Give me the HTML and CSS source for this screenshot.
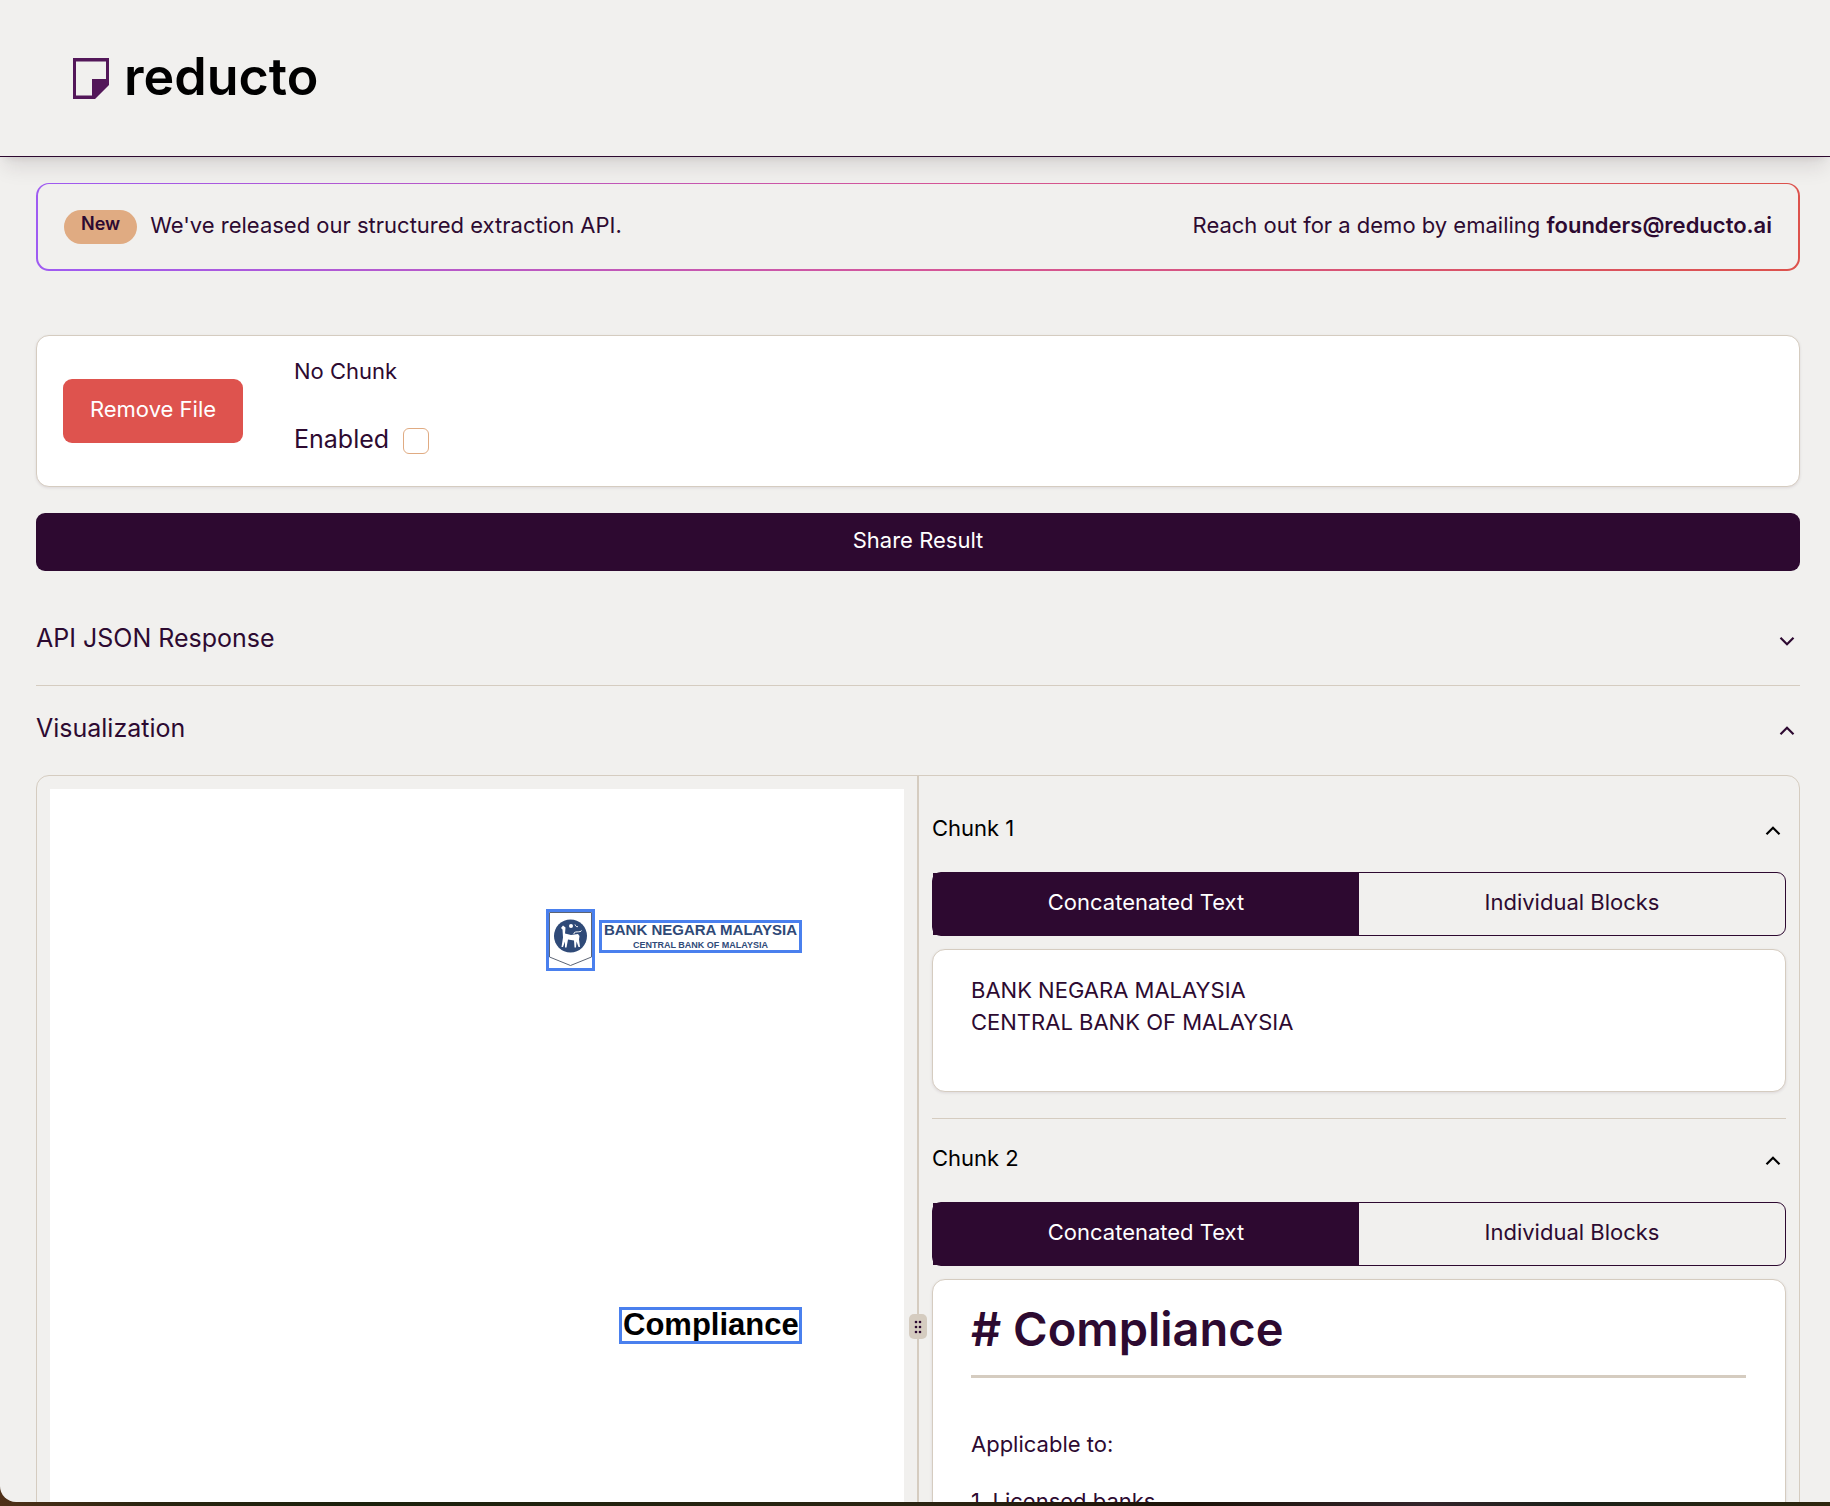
FILE: index.html
```
<!DOCTYPE html>
<html lang="en">
<head>
  <meta charset="utf-8">
  <meta name="viewport" content="width=device-width, initial-scale=1">
  <title>Reducto</title>
  <link rel="stylesheet" href="styles.css">
</head>
<body>
  <div class="window">
    <header class="site-header">
      <a class="brand" href="#">
        <svg class="brand-mark" viewBox="0 0 36 41" aria-hidden="true"><path fill-rule="evenodd" d="M0 0H36V27L22 41H0ZM3 3.5V37.5H19V21H33V3.5Z"/></svg>
        <span>reducto</span>
      </a>
    </header>

    <main class="content">
      <section class="banner">
        <span class="pill">New</span>
        <p class="banner-text">We've released our structured extraction API.</p>
        <p class="banner-text banner-contact">Reach out for a demo by emailing <a href="mailto:founders@reducto.ai">founders@reducto.ai</a></p>
      </section>

      <section class="card settings">
        <button class="button button-danger" type="button">Remove File</button>
        <div class="option">
          <p>No Chunk</p>
          <label class="toggle">Enabled <input type="checkbox"></label>
        </div>
      </section>

      <button class="button button-primary" type="button">Share Result</button>

      <div class="accordion">
        <h2 class="accordion-item">
          <button class="trigger" type="button" aria-expanded="false">
            <span>API JSON Response</span>
            <svg class="chevron" viewBox="0 0 24 24" aria-hidden="true"><path d="M6 9l6 6 6-6"/></svg>
          </button>
        </h2>
        <h2>
          <button class="trigger" type="button" aria-expanded="true">
            <span>Visualization</span>
            <svg class="chevron" viewBox="0 0 24 24" aria-hidden="true"><path d="M6 15l6-6 6 6"/></svg>
          </button>
        </h2>
      </div>

      <div class="split">
        <div class="pane">
          <div class="page">
            <div class="region region-emblem">
              <svg viewBox="0 0 43 56" aria-hidden="true">
                <path class="shield" d="M.5 .5H42.5V45L21.5 53.5L.5 45Z"/>
                <circle class="disc" cx="21.5" cy="24" r="16.5"/>
                <g class="deer">
                  <path d="M12 16L14 13.500L16.500 15.500L16 21.500L22 23L29 22L30.500 24L30 27.500L31 35H29.500L27.500 29.500L27 35.500H25.500L25 28.500L19 27.500L17.500 35.500H16L16 29.500L14 35H12.500L14 25.500L13.500 17.500Z"/>
                  <path class="tail" d="M25 22C24 18.500 32 21 32.500 18.500"/>
                  <circle cx="22" cy="14" r="2"/>
                  <path class="tail" d="M26 12.500C26.500 14.500 28 15 29 14.500"/>
                </g>
              </svg>
            </div>
            <div class="region region-name">
              <span class="scan-name">BANK NEGARA MALAYSIA</span>
              <span class="scan-sub">CENTRAL BANK OF MALAYSIA</span>
            </div>
            <div class="region region-title">Compliance</div>
          </div>
        </div>

        <div class="divider">
          <span class="grip">
            <svg viewBox="0 0 10 14" aria-hidden="true"><circle cx="3" cy="2" r="1.300"/><circle cx="7" cy="2" r="1.300"/><circle cx="3" cy="7" r="1.300"/><circle cx="7" cy="7" r="1.300"/><circle cx="3" cy="12" r="1.300"/><circle cx="7" cy="12" r="1.300"/></svg>
          </span>
        </div>

        <div class="pane">
          <section class="chunk">
            <h3>
              <button class="trigger trigger-chunk" type="button" aria-expanded="true">
                <span>Chunk 1</span>
                <svg class="chevron" viewBox="0 0 24 24" aria-hidden="true"><path d="M6 15l6-6 6 6"/></svg>
              </button>
            </h3>
            <div class="tabs">
              <button class="tab tab-active" type="button">Concatenated Text</button>
              <button class="tab" type="button">Individual Blocks</button>
            </div>
            <div class="card chunk-body">
              <p>BANK NEGARA MALAYSIA<br>CENTRAL BANK OF MALAYSIA</p>
            </div>
          </section>

          <section class="chunk">
            <h3>
              <button class="trigger trigger-chunk" type="button" aria-expanded="true">
                <span>Chunk 2</span>
                <svg class="chevron" viewBox="0 0 24 24" aria-hidden="true"><path d="M6 15l6-6 6 6"/></svg>
              </button>
            </h3>
            <div class="tabs">
              <button class="tab tab-active" type="button">Concatenated Text</button>
              <button class="tab" type="button">Individual Blocks</button>
            </div>
            <div class="card chunk-body">
              <h1 class="doc-title"># Compliance</h1>
              <p>Applicable to:</p>
              <p>1. Licensed banks</p>
            </div>
          </section>
        </div>
      </div>
    </main>
  </div>
</body>
</html>
```
FILE: styles.css
```
:root {
  --ink: #2d0a31;
  --plum: #2d0930;
  --paper: #f1f0ee;
  --line: #d5ccc0;
  --tan: #e0ab82;
  --red: #de534e;
  --blue: #4a80ee;
  --navy: #2f4a78;
}

* {
  box-sizing: border-box;
}

h1, h2, h3, p {
  margin: 0;
  font: inherit;
}

button {
  font: inherit;
  color: inherit;
  border: 0;
  background: none;
  cursor: pointer;
}

body {
  margin: 0;
  height: 100vh;
  padding-bottom: 4px;
  overflow: hidden;
  background: linear-gradient(to right, #4f3018, #2a2410 8%, #1b200c 20%, #2b2412 50%, #1c1208 65%, #33242a 78%, #1b2018 86%, #2e260e);
  font-family: Inter, "Liberation Sans", sans-serif;
  font-size: 22px;
  line-height: 32px;
  color: var(--ink);
}

.window {
  height: 100%;
  overflow: hidden;
  background: var(--paper);
  border-bottom-left-radius: 16px;
}

/* Header */

.site-header {
  position: relative;
  display: flex;
  padding: 46px 73px;
  border-bottom: 1px solid var(--plum);
  box-shadow: 0 13px 20px -4px rgba(40, 25, 30, .12), 0 5px 8px -5px rgba(40, 25, 30, .12);
}

.brand {
  display: flex;
  align-items: center;
  gap: 15px;
  font-size: 52px;
  font-weight: 600;
  line-height: 62px;
  color: #000;
  text-decoration: none;
}

.brand span {
  padding-bottom: 2px;
}

.brand-mark {
  width: 36px;
  height: 41px;
  fill: #531759;
}

/* Main column */

.content {
  padding: 26px 30px 26px 36px;
}

.banner {
  display: flex;
  align-items: center;
  gap: 13px;
  min-height: 88px;
  padding: 0 26px;
  border: 2px solid transparent;
  border-top-width: 1px;
  border-radius: 13px;
  background:
    linear-gradient(var(--paper), var(--paper)) padding-box,
    linear-gradient(to right, #9f5bf2, #d4569a 50%, #dd524c) border-box;
}

.banner-text {
  padding-bottom: 4px;
}

.banner-contact {
  margin-left: auto;
}

.banner-contact a {
  font-weight: 600;
  color: inherit;
  text-decoration: none;
}

.pill {
  padding: 0 17px 6px;
  border-radius: 17px;
  background: var(--tan);
  font-size: 18px;
  font-weight: 600;
  line-height: 28px;
}

.card {
  border: 1px solid var(--line);
  border-radius: 13px;
  background: #fff;
  box-shadow: 0 1px 3px rgba(45, 10, 49, .1);
}

.settings {
  display: flex;
  align-items: center;
  gap: 51px;
  margin-top: 64px;
  padding: 19px 26px 29px;
}

.button {
  padding: 14px 26px 18px;
  border-radius: 9px;
  color: #fff;
}

.button-danger {
  min-width: 180px;
  margin-top: 10px;
  background: var(--red);
}

.button-primary {
  display: block;
  width: 100%;
  margin-top: 26px;
  padding: 11px 26px 15px;
  background: var(--plum);
}

.option {
  display: grid;
  gap: 34px;
}

.toggle {
  display: flex;
  align-items: center;
  gap: 14px;
  font-size: 25px;
  line-height: 36px;
}

.toggle input {
  appearance: none;
  width: 26px;
  height: 26px;
  margin: 4px 0 0;
  border: 1px solid var(--tan);
  border-radius: 6px;
  background: #fff;
}

/* Accordion */

.accordion {
  margin-top: 25px;
}

.accordion-item {
  border-bottom: 1px solid var(--line);
}

.trigger {
  display: flex;
  align-items: center;
  justify-content: space-between;
  width: 100%;
  height: 89px;
  padding: 0;
  font-size: 25px;
  text-align: left;
}

.trigger span {
  padding-bottom: 5px;
}

.trigger-chunk {
  height: 83px;
  font-size: 22px;
  color: #000;
}

.chevron {
  width: 26px;
  height: 26px;
  fill: none;
  stroke: currentColor;
  stroke-width: 2;
}

/* Document and chunks, side by side */

.split {
  display: grid;
  grid-template-columns: 1fr 2px 1fr;
  min-height: 1103px;
  border: 1px solid var(--line);
  border-radius: 13px;
}

.pane {
  display: flex;
  flex-direction: column;
  padding: 13px;
}

.divider {
  display: flex;
  align-items: center;
  justify-content: center;
  background: var(--line);
}

.grip {
  display: flex;
  flex: none;
  align-items: center;
  justify-content: center;
  width: 18px;
  height: 25px;
  border-radius: 5px;
  background: var(--line);
}

.grip svg {
  width: 10px;
  height: 14px;
  fill: var(--ink);
}

.page {
  position: relative;
  flex: 1;
  background: #fff;
}

/* Detected regions drawn over the scanned page */

.region {
  position: absolute;
  overflow: hidden;
  border: 3px solid var(--blue);
  font-family: "Liberation Sans", Arial, sans-serif;
  font-weight: 700;
  white-space: nowrap;
}

.region-emblem {
  top: 120px;
  right: 309px;
  width: 49px;
  height: 62px;
}

.region-emblem svg {
  display: block;
  width: 43px;
  height: 56px;
}

.shield {
  fill: none;
  stroke: #5c6474;
}

.disc {
  fill: var(--navy);
}

.deer {
  fill: #fff;
}

.tail {
  fill: none;
  stroke: #fff;
}

.region-name {
  top: 131px;
  right: 102px;
  display: grid;
  align-content: start;
  justify-items: center;
  width: 203px;
  height: 33px;
  color: var(--navy);
}

.scan-name {
  font-size: 15px;
  line-height: 14px;
}

.scan-sub {
  font-size: 9px;
  line-height: 16px;
}

.region-title {
  top: 518px;
  right: 102px;
  width: 183px;
  height: 37px;
  padding-left: 1px;
  font-size: 31px;
  line-height: 30px;
  color: #000;
}

/* Chunks */

.chunk + .chunk {
  margin-top: 26px;
  border-top: 1px solid var(--line);
}

.tabs {
  display: grid;
  grid-template-columns: 1fr 1fr;
  border: 1px solid var(--plum);
  border-radius: 9px;
}

.tab {
  padding: 13px 16px 17px;
}

.tab-active {
  background: var(--plum);
  color: #fff;
}

.chunk-body {
  margin-top: 13px;
  padding: 24px 39px 53px 38px;
}

.chunk-body p + p {
  margin-top: 25px;
}

.doc-title {
  margin-bottom: 50px;
  padding-bottom: 21px;
  border-bottom: 3px solid var(--line);
  font-size: 47px;
  font-weight: 600;
  line-height: 50px;
}
```
